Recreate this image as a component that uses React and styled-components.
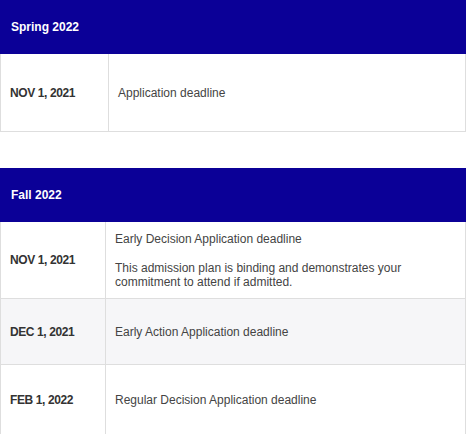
import React from 'react';
import styled, { createGlobalStyle } from 'styled-components';

const GlobalStyle = createGlobalStyle`
  body {
    margin: 0;
    background: #fff;
    font-family: "Liberation Sans", Arial, sans-serif;
    color: #3a3a3a;
  }
`

const Page = styled.div`
  width: 466px;
  display: flex;
  flex-direction: column;
  gap: 36px;
`

const Table = styled.table`
  width: 466px;
  border-collapse: collapse;
  table-layout: fixed;
`

const HeadCell = styled.th`
  height: 52px;
  padding: 0 10px;
  background: #0b0097;
  color: #fff;
  font-size: 12px;
  font-weight: 700;
  text-align: left;
  border: 1px solid #0b0097;
`

const Row = styled.tr`
  height: ${p => p.$h}px;
  background: ${p => (p.$shade ? '#f6f6f8' : '#fff')};
`

const DateCell = styled.td`
  padding: 0 9px;
  font-size: 12px;
  letter-spacing: -0.4px;
  font-weight: 700;
  color: #333;
  border: 1px solid #dedede;
  border-top: none;
  white-space: nowrap;
`

const InfoCell = styled.td`
  padding: 0 9px;
  font-size: 12px;
  line-height: 14px;
  color: #444;
  border: 1px solid #dedede;
  border-top: none;
`

const Note = styled.p`
  margin: 15px 0 0;
  padding-right: 45px;
`

const terms = [
  {
    title: 'Spring 2022',
    col: 108,
    rows: [{ date: 'NOV 1, 2021', text: 'Application deadline', h: 78 }],
  },
  {
    title: 'Fall 2022',
    col: 105,
    rows: [
      {
        date: 'NOV 1, 2021',
        text: 'Early Decision Application deadline',
        note: 'This admission plan is binding and demonstrates your commitment to attend if admitted.',
        h: 77,
      },
      { date: 'DEC 1, 2021', text: 'Early Action Application deadline', h: 66, shade: true },
      { date: 'FEB 1, 2022', text: 'Regular Decision Application deadline', h: 70 },
    ],
  },
]

const App = () => {
  return (
    <>
      <GlobalStyle />
      <Page>
        {terms.map(term => (
          <Table key={term.title}>
            <colgroup>
              <col style={{ width: term.col }} />
              <col />
            </colgroup>
            <thead>
              <tr>
                <HeadCell colSpan={2}>{term.title}</HeadCell>
              </tr>
            </thead>
            <tbody>
              {term.rows.map(r => (
                <Row key={r.text} $h={r.h} $shade={r.shade}>
                  <DateCell>{r.date}</DateCell>
                  <InfoCell>
                    {r.text}
                    {r.note && <Note>{r.note}</Note>}
                  </InfoCell>
                </Row>
              ))}
            </tbody>
          </Table>
        ))}
      </Page>
    </>
  )
}

export default App;
